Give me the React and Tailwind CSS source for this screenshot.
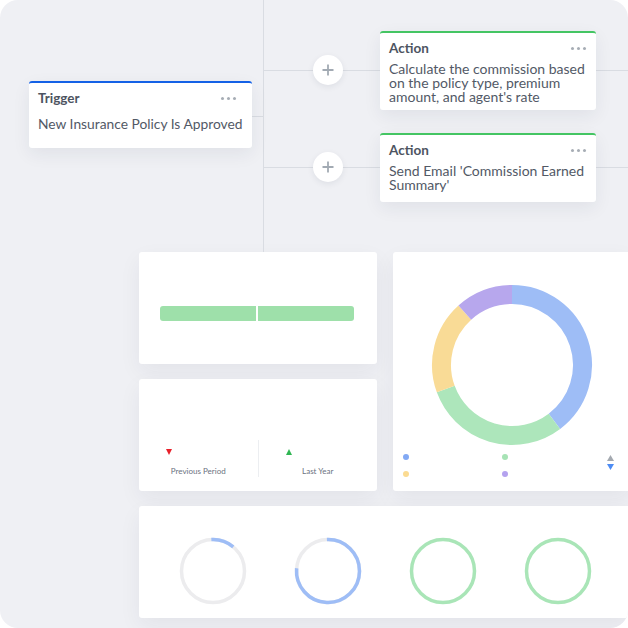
import React from "react";

const FONT = "font-['Lato','Noto_Sans',sans-serif]";

function Dots() {
  return (
    <div className="flex items-center gap-[3px]">
      <span className="w-[3px] h-[3px] rounded-full bg-[#a7adb5]" />
      <span className="w-[3px] h-[3px] rounded-full bg-[#a7adb5]" />
      <span className="w-[3px] h-[3px] rounded-full bg-[#a7adb5]" />
    </div>
  );
}

function PlusButton({ className }) {
  return (
    <div
      className={
        "absolute w-[30px] h-[30px] rounded-full bg-white shadow-[0_2px_6px_rgba(30,40,70,0.08)] flex items-center justify-center " +
        className
      }
    >
      <svg width="12" height="12" viewBox="0 0 12 12">
        <path d="M6 0.5V11.5M0.5 6H11.5" stroke="#a2aab3" strokeWidth="1.8" />
      </svg>
    </div>
  );
}

function polar(cx, cy, r, deg) {
  const a = (deg * Math.PI) / 180;
  return [cx + r * Math.sin(a), cy - r * Math.cos(a)];
}

function arcPath(cx, cy, r, a0, a1) {
  const [x0, y0] = polar(cx, cy, r, a0);
  const [x1, y1] = polar(cx, cy, r, a1);
  const large = a1 - a0 > 180 ? 1 : 0;
  return `M ${x0} ${y0} A ${r} ${r} 0 ${large} 1 ${x1} ${y1}`;
}

function Donut() {
  const segs = [
    [0, 143, "#9ebdf6"],
    [143, 250, "#ade6bb"],
    [250, 318, "#f9db96"],
    [318, 360, "#b7a7ed"],
  ];
  return (
    <svg width="162" height="162" viewBox="0 0 162 162">
      {segs.map(([a, b, c], i) => (
        <path key={i} d={arcPath(81, 81, 70.5, a, b - 0.001)} stroke={c} strokeWidth="19" fill="none" />
      ))}
    </svg>
  );
}

function Ring({ from, to, color, base }) {
  return (
    <svg width="70" height="70" viewBox="0 0 70 70">
      <circle cx="35" cy="35" r="31.5" stroke={base} strokeWidth="3.5" fill="none" />
      {to - from > 0 && to - from < 360 && (
        <path d={arcPath(35, 35, 31.5, from, to)} stroke={color} strokeWidth="3.5" fill="none" />
      )}
    </svg>
  );
}

export default function App() {
  return (
    <div className={"w-[628px] h-[628px] rounded-[18px] overflow-hidden bg-[#eff0f4] " + FONT}>
      {/* Workflow diagram */}
      <div className="relative h-[252px]">
        {/* connector lines */}
        <div className="absolute left-[263px] top-0 w-px h-[252px] bg-[#d9dce2]" />
        <div className="absolute left-[200px] top-[116px] w-[63px] h-px bg-[#d9dce2]" />
        <div className="absolute left-[263px] top-[70px] w-[365px] h-px bg-[#d9dce2]" />
        <div className="absolute left-[263px] top-[167px] w-[365px] h-px bg-[#d9dce2]" />

        <PlusButton className="left-[313px] top-[55px]" />
        <PlusButton className="left-[313px] top-[152px]" />

        {/* Trigger node */}
        <div className="absolute left-[29px] top-[81px] w-[223px] h-[67px] bg-white rounded-[3px] border-t-2 border-[#1461e6] shadow-[0_6px_18px_rgba(30,40,70,0.07)] px-[9px] pt-[7px]">
          <div className="flex items-center justify-between h-[16px]">
            <span className="text-[13.5px] font-bold text-[#4d5461]">Trigger</span>
            <div className="mr-[7px]"><Dots /></div>
          </div>
          <div className="mt-[10px] whitespace-nowrap text-[13.8px] leading-[16px] text-[#525966]">New Insurance Policy Is Approved</div>
        </div>

        {/* Action node 1 */}
        <div className="absolute left-[380px] top-[31px] w-[216px] h-[79px] bg-white rounded-[3px] border-t-2 border-[#44c563] shadow-[0_6px_18px_rgba(30,40,70,0.07)] px-[9px] pt-[7px]">
          <div className="flex items-center justify-between h-[16px]">
            <span className="text-[13.5px] font-bold text-[#4d5461]">Action</span>
            <div className="mr-[1px]"><Dots /></div>
          </div>
          <div className="mt-[6px] text-[14px] leading-[14px] text-[#525966]">
            Calculate the commission based on the policy type, premium amount, and agent's rate
          </div>
        </div>

        {/* Action node 2 */}
        <div className="absolute left-[380px] top-[133px] w-[216px] h-[69px] bg-white rounded-[3px] border-t-2 border-[#44c563] shadow-[0_6px_18px_rgba(30,40,70,0.07)] px-[9px] pt-[7px]">
          <div className="flex items-center justify-between h-[16px]">
            <span className="text-[13.5px] font-bold text-[#4d5461]">Action</span>
            <div className="mr-[1px]"><Dots /></div>
          </div>
          <div className="mt-[6px] text-[14px] leading-[14px] text-[#525966]">
            Send Email 'Commission Earned Summary'
          </div>
        </div>
      </div>

      {/* Dashboard cards */}
      <div className="pl-[139px] grid grid-cols-[238px_238px] grid-rows-[112px_112px_112px] gap-x-[16px] gap-y-[15px]">
        {/* Card A: bar */}
        <div className="bg-white rounded-[3px] shadow-[0_8px_22px_rgba(30,40,70,0.06)] pl-[21px] pr-[23px] pt-[54px]">
          <div className="flex h-[15px] gap-[2px]">
            <div className="flex-1 rounded-l-[3px] bg-[#9ee0aa]" />
            <div className="flex-1 rounded-r-[3px] bg-[#9ee0aa]" />
          </div>
        </div>

        {/* Card C: donut */}
        <div className="row-span-2 bg-white rounded-[3px] shadow-[0_8px_22px_rgba(30,40,70,0.06)] flex flex-col">
          <div className="flex justify-center pt-[32px]">
            <Donut />
          </div>
          <div className="flex mt-[8px] pl-[10px] pr-[17px]">
            <div className="flex flex-col gap-[11px] w-[99px]">
              <span className="w-[6px] h-[6px] rounded-full bg-[#82a9f4]" />
              <span className="w-[6px] h-[6px] rounded-full bg-[#fbdb92]" />
            </div>
            <div className="flex flex-col gap-[11px] flex-1">
              <span className="w-[6px] h-[6px] rounded-full bg-[#a7e3b5]" />
              <span className="w-[6px] h-[6px] rounded-full bg-[#b4a2ef]" />
            </div>
            <div className="flex flex-col gap-[3px] pt-[1px]">
              <svg width="7" height="6" viewBox="0 0 7 6"><path d="M3.5 0L7 6H0Z" fill="#a4a9b0" /></svg>
              <svg width="7" height="6" viewBox="0 0 7 6"><path d="M0 0H7L3.5 6Z" fill="#4d8cf4" /></svg>
            </div>
          </div>
        </div>

        {/* Card B: comparisons */}
        <div className="bg-white rounded-[3px] shadow-[0_8px_22px_rgba(30,40,70,0.06)] flex items-end pb-[14px]">
          <div className="flex-1 h-[37px] flex flex-col">
            <div className="pl-[27px] pt-[9px] h-[20px]">
              <svg width="6" height="6" viewBox="0 0 6 6"><path d="M0 0H6L3 6Z" fill="#e8202a" /></svg>
            </div>
            <div className="text-center text-[8px] leading-[10px] mt-[6px] text-[#6b7280]">Previous Period</div>
          </div>
          <div className="flex-1 h-[37px] flex flex-col border-l border-[#eceef1]">
            <div className="pl-[27px] pt-[9px] h-[20px]">
              <svg width="6" height="6" viewBox="0 0 6 6"><path d="M3 0L6 6H0Z" fill="#30b653" /></svg>
            </div>
            <div className="text-center text-[8px] leading-[10px] mt-[6px] text-[#6b7280]">Last Year</div>
          </div>
        </div>

        {/* Card D: rings */}
        <div className="col-span-2 bg-white rounded-[3px] shadow-[0_8px_22px_rgba(30,40,70,0.06)] px-[16px] pt-[30px] grid grid-cols-4">
          <div className="flex justify-center">
            <Ring from={-3} to={40} color="#9ebdf6" base="#ececee" />
          </div>
          <div className="flex justify-center">
            <Ring from={-2} to={275} color="#9ebdf6" base="#ececee" />
          </div>
          <div className="flex justify-center">
            <Ring from={0} to={360} color="#a9e5b7" base="#a9e5b7" />
          </div>
          <div className="flex justify-center">
            <Ring from={0} to={360} color="#a9e5b7" base="#a9e5b7" />
          </div>
        </div>
      </div>
    </div>
  );
}
